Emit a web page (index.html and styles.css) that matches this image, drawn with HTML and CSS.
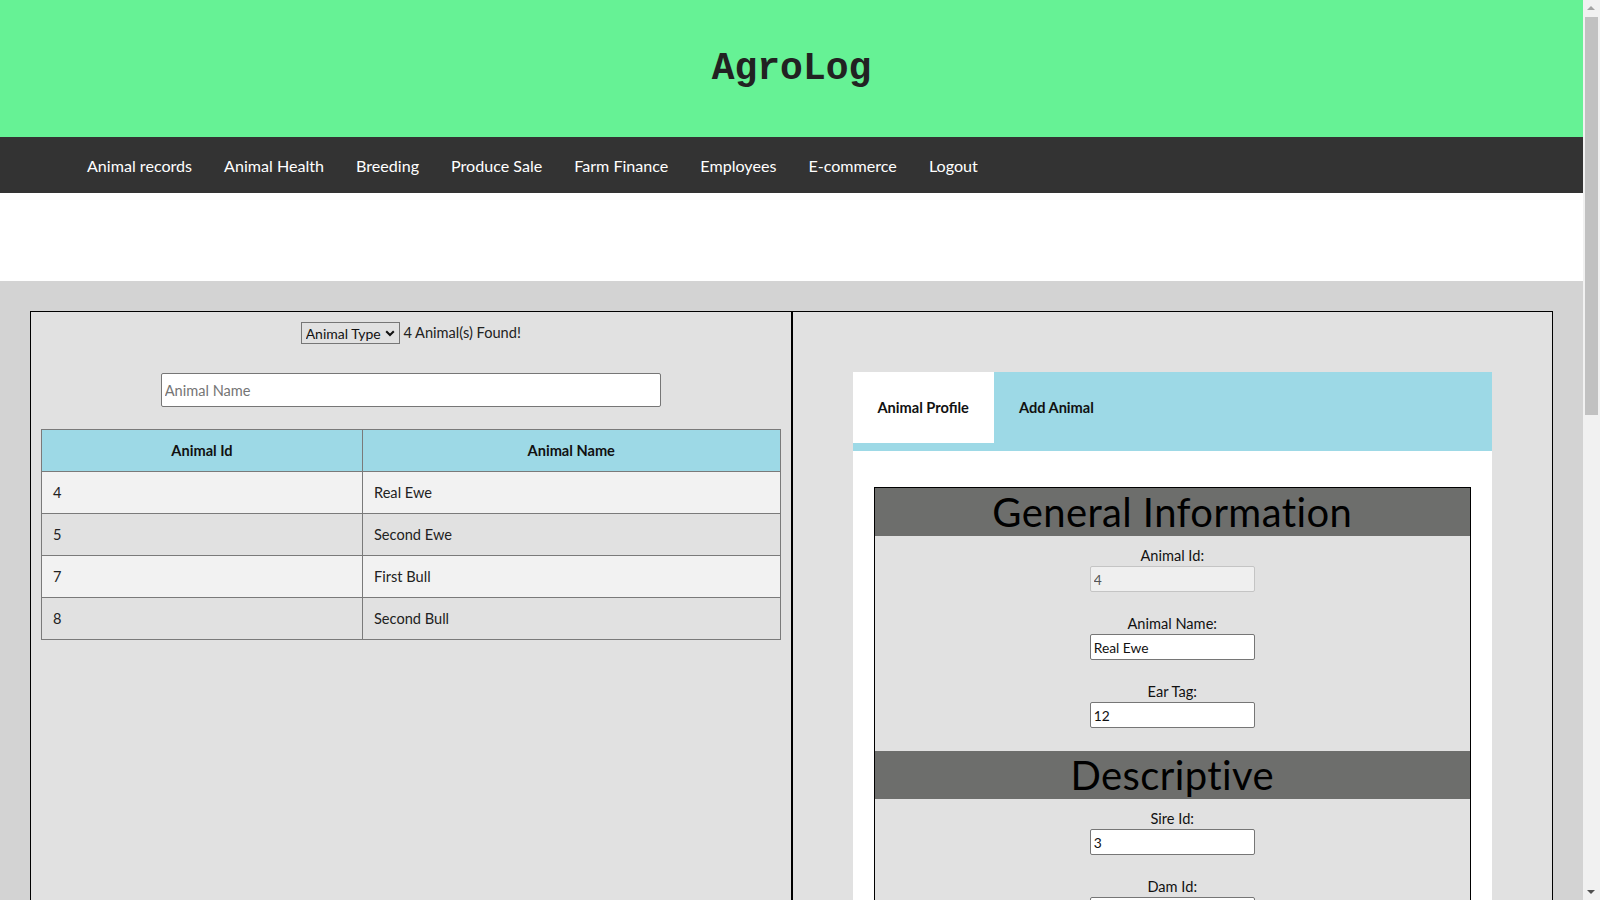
FILE: index.html
```html
<!DOCTYPE html>
<html lang="en">
<head>
<meta charset="utf-8">
<title>AgroLog</title>
<link rel="stylesheet" href="styles.css">
</head>
<body>
<header class="site-header">
  <h1 class="brand">AgroLog</h1>
</header>
<nav class="topnav">
  <a href="#">Animal records</a>
  <a href="#">Animal Health</a>
  <a href="#">Breeding</a>
  <a href="#">Produce Sale</a>
  <a href="#">Farm Finance</a>
  <a href="#">Employees</a>
  <a href="#">E-commerce</a>
  <a href="#">Logout</a>
</nav>
<div class="spacer"></div>
<main class="workspace">
  <section class="panel panel-list">
    <div class="filter-row">
      <span class="select-wrap">
        <select class="type-select"><option>Animal Type</option></select>
        <svg class="chev" width="10" height="7" viewBox="0 0 10 7"><path d="M1.2 1.2 L5 5 L8.8 1.2" fill="none" stroke="#111" stroke-width="2"/></svg>
      </span>
      <span class="count">4 Animal(s) Found!</span>
    </div>
    <input class="search" type="text" placeholder="Animal Name">
    <table class="animal-table">
      <colgroup><col class="col-id"><col></colgroup>
      <thead>
        <tr><th>Animal Id</th><th>Animal Name</th></tr>
      </thead>
      <tbody>
        <tr><td>4</td><td>Real Ewe</td></tr>
        <tr><td>5</td><td>Second Ewe</td></tr>
        <tr><td>7</td><td>First Bull</td></tr>
        <tr><td>8</td><td>Second Bull</td></tr>
      </tbody>
    </table>
  </section>
  <section class="panel panel-detail">
    <div class="tabs-box">
      <div class="tab-bar">
        <button class="tab active">Animal Profile</button>
        <button class="tab">Add Animal</button>
      </div>
      <div class="tab-content">
        <div class="form-box">
          <div class="form-section">
            <h2 class="section-title">General Information</h2>
            <div class="field"><label>Animal Id:</label><input class="ro" type="text" value="4" readonly></div>
            <div class="field"><label>Animal Name:</label><input type="text" value="Real Ewe"></div>
            <div class="field"><label>Ear Tag:</label><input type="text" value="12"></div>
          </div>
          <div class="form-section">
            <h2 class="section-title">Descriptive</h2>
            <div class="field"><label>Sire Id:</label><input type="text" value="3"></div>
            <div class="field"><label>Dam Id:</label><input type="text" value="2"></div>
            <div class="field"><label>Breed:</label><input type="text" value="Merino"></div>
            <div class="field"><label>Sex:</label><input type="text" value="Female"></div>
            <div class="field"><label>Color:</label><input type="text" value="White"></div>
          </div>
          <div class="form-section">
            <h2 class="section-title">Dates</h2>
            <div class="field"><label>Birth Date:</label><input type="text" value="2020-03-14"></div>
            <div class="field"><label>Purchase Date:</label><input type="text" value=""></div>
            <div class="field"><label>Weaning Date:</label><input type="text" value=""></div>
          </div>
          <div class="form-section">
            <h2 class="section-title">Status</h2>
            <div class="field"><label>Status:</label><input type="text" value="Active"></div>
            <div class="field"><label>Location:</label><input type="text" value=""></div>
            <div class="field"><label>Weight:</label><input type="text" value=""></div>
            <div class="field"><label>Owner:</label><input type="text" value=""></div>
            <div class="field"><label>Notes:</label><input type="text" value=""></div>
          </div>
        </div>
      </div>
    </div>
  </section>
</main>
<div class="fake-scrollbar" aria-hidden="true">
  <span class="sb-up"></span>
  <span class="sb-thumb"></span>
  <span class="sb-down"></span>
</div>
</body>
</html>
```

FILE: styles.css
```css
body {
  margin: 0;
  padding-right: 17px;
  font-family: Lato, "Open Sans", sans-serif;
  color: #111;
  background: #fff;
}

/* window scrollbar (drawn, as the capture hides native ones) */
.fake-scrollbar {
  position: fixed;
  top: 0;
  right: 0;
  width: 17px;
  height: 100vh;
  background: #f1f1f1;
}
.sb-thumb {
  position: absolute;
  top: 17px;
  left: 2px;
  width: 13px;
  height: 398px;
  background: #c1c1c1;
}
.sb-up,
.sb-down {
  position: absolute;
  left: 4px;
  width: 0;
  height: 0;
  border-left: 4px solid transparent;
  border-right: 4px solid transparent;
}
.sb-up {
  top: 6px;
  border-bottom: 4px solid #a3a3a3;
}
.sb-down {
  bottom: 6px;
  border-top: 4px solid #505050;
}

.site-header {
  height: 137px;
  background: #66f295;
  display: flex;
  align-items: center;
  justify-content: center;
}
.brand {
  margin: 0;
  font-family: "Liberation Mono", "Courier New", monospace;
  font-weight: bold;
  font-size: 38px;
  color: #222;
}

.topnav {
  height: 56px;
  background: #333;
  display: flex;
  align-items: center;
  padding-left: 71px;
}
.topnav a {
  color: #fff;
  text-decoration: none;
  font-size: 16.1px;
  padding: 0 16px;
}

.spacer {
  height: 88px;
  background: #fff;
}

.workspace {
  background: #d3d3d3;
  padding: 30px;
  display: flex;
}
.panel {
  flex: 0 0 50%;
  box-sizing: border-box;
  border: 1px solid #000;
  background: #e1e1e1;
  min-width: 0;
}

.panel-list {
  padding: 10px;
}
.filter-row {
  text-align: center;
  font-size: 14.6px;
  line-height: 22px;
  height: 22px;
}
.select-wrap {
  display: inline-block;
  position: relative;
  vertical-align: top;
  width: 99px;
  height: 22px;
  border: 1px solid #767676;
  box-sizing: border-box;
}
.type-select {
  appearance: none;
  -webkit-appearance: none;
  border: 0;
  background: transparent;
  font-family: Lato, sans-serif;
  font-size: 14px;
  color: #111;
  width: 100%;
  height: 20px;
  padding: 0 0 0 4px;
  margin: 0;
  display: block;
}
.chev {
  position: absolute;
  right: 4px;
  top: 7px;
}
.count {
  color: #222;
}

.search {
  display: block;
  margin: 29px auto 0;
  width: 500px;
  height: 34px;
  box-sizing: border-box;
  border: 1px solid #767676;
  border-radius: 2px;
  padding: 0 3px;
  font-family: Lato, sans-serif;
  font-size: 14.6px;
  background: #fff;
}
.search::placeholder {
  color: #757575;
}

.animal-table {
  margin-top: 22px;
  width: 100%;
  border-collapse: collapse;
  font-size: 14.6px;
}
.col-id {
  width: 321px;
}
.animal-table th,
.animal-table td {
  border: 1px solid #7a7a7a;
  height: 42px;
  padding: 0 11px;
  box-sizing: border-box;
}
.animal-table th {
  background: #9dd9e6;
  font-weight: bold;
  text-align: center;
  color: #111;
}
.animal-table td {
  text-align: left;
  color: #222;
}
.animal-table tbody tr:nth-child(odd) td {
  background: #f2f2f2;
}
.animal-table tbody tr:nth-child(even) td {
  background: #e1e1e1;
}

.panel-detail {
  padding: 60px;
}
.tabs-box {
  background: #fff;
}
.tab-bar {
  display: flex;
  background: #9dd9e6;
  padding-bottom: 8px;
}
.tab {
  height: 71px;
  padding: 0 25px;
  border: 0;
  background: transparent;
  font-family: Lato, sans-serif;
  font-weight: bold;
  font-size: 14.6px;
  color: #111;
  cursor: pointer;
}
.tab.active {
  background: #fff;
}
.tab-content {
  padding: 36px 21px 21px;
}
.form-box {
  border: 1px solid #000;
  background: #e1e1e1;
}
.form-section {
  padding-bottom: 11px;
}
.section-title {
  margin: 0;
  height: 48px;
  background: #6d6e6c;
  font-size: 40px;
  line-height: 48px;
  font-weight: normal;
  letter-spacing: 0.4px;
  text-align: center;
  color: #000;
}
.field {
  padding: 10px 0 12px;
  text-align: center;
}
.field label {
  display: block;
  font-size: 14.6px;
  line-height: 20px;
  color: #111;
}
.field input {
  display: block;
  margin: 0 auto;
  width: 165px;
  height: 26px;
  box-sizing: border-box;
  border: 1px solid #767676;
  border-radius: 2px;
  padding: 0 3px;
  font-family: Lato, sans-serif;
  font-size: 13.8px;
  color: #111;
  background: #fff;
}
.field input.ro {
  background: #efefef;
  border-color: #c4c4c4;
  color: #545454;
}
```
